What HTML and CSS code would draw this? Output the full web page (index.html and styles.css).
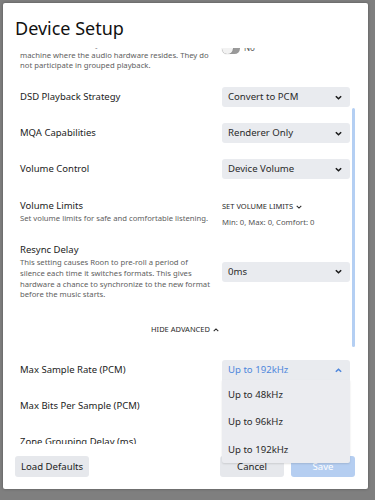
FILE: index.html
```html
<!DOCTYPE html>
<html lang="en">
<head>
    <meta charset="UTF-8">
    <meta name="viewport" content="width=device-width, initial-scale=1.0">
    <title>Device Setup</title>
    <link rel="stylesheet" href="styles.css">
</head>
<body>

<div class="modal">
    <div class="modal-head">
        <h1>Device Setup</h1>
    </div>

    <div class="modal-body">
        <div class="settings">
            <div class="row">
                <div class="info">
                    <div class="label">Private Zone</div>
                    <div class="desc">Private zones are only available on the<br>machine where the audio hardware resides. They do<br>not participate in grouped playback.</div>
                </div>
                <div class="control toggle-wrap">
                    <span class="toggle"><span class="knob"></span></span>
                    <span class="toggle-text">No</span>
                </div>
            </div>

            <div class="row">
                <div class="label">DSD Playback Strategy</div>
                <div class="select"><span>Convert to PCM</span><svg class="chev" viewBox="0 0 10 6"><path d="M1.2 1.2l3.8 3.6 3.8-3.6"/></svg></div>
            </div>

            <div class="row">
                <div class="label">MQA Capabilities</div>
                <div class="select"><span>Renderer Only</span><svg class="chev" viewBox="0 0 10 6"><path d="M1.2 1.2l3.8 3.6 3.8-3.6"/></svg></div>
            </div>

            <div class="row">
                <div class="label">Volume Control</div>
                <div class="select"><span>Device Volume</span><svg class="chev" viewBox="0 0 10 6"><path d="M1.2 1.2l3.8 3.6 3.8-3.6"/></svg></div>
            </div>

            <div class="row row-top limits-row">
                <div class="info">
                    <div class="label">Volume Limits</div>
                    <div class="desc">Set volume limits for safe and comfortable listening.</div>
                </div>
                <div class="control">
                    <div class="link">SET VOLUME LIMITS <svg class="chev small" viewBox="0 0 10 6"><path d="M1.2 1.2l3.8 3.6 3.8-3.6"/></svg></div>
                    <div class="limits">Min: 0, Max: 0, Comfort: 0</div>
                </div>
            </div>

            <div class="row">
                <div class="info">
                    <div class="label">Resync Delay</div>
                    <div class="desc">This setting causes Roon to pre-roll a period of<br>silence each time it switches formats. This gives<br>hardware a chance to synchronize to the new format<br>before the music starts.</div>
                </div>
                <div class="select"><span>0ms</span><svg class="chev" viewBox="0 0 10 6"><path d="M1.2 1.2l3.8 3.6 3.8-3.6"/></svg></div>
            </div>

            <div class="advanced">
                <span class="link">HIDE ADVANCED <svg class="chev small" viewBox="0 0 10 6"><path d="M1.2 4.8l3.8-3.6 3.8 3.6"/></svg></span>
            </div>

            <div class="row">
                <div class="label">Max Sample Rate (PCM)</div>
                <div class="select open"><span>Up to 192kHz</span><svg class="chev" viewBox="0 0 10 6"><path d="M1.2 4.8l3.8-3.6 3.8 3.6"/></svg></div>
            </div>

            <div class="row">
                <div class="label">Max Bits Per Sample (PCM)</div>
                <div class="select"><span>24 bits</span><svg class="chev" viewBox="0 0 10 6"><path d="M1.2 1.2l3.8 3.6 3.8-3.6"/></svg></div>
            </div>

            <div class="row">
                <div class="label">Zone Grouping Delay (ms)</div>
                <div class="select"><span>0ms</span><svg class="chev" viewBox="0 0 10 6"><path d="M1.2 1.2l3.8 3.6 3.8-3.6"/></svg></div>
            </div>
        </div>

        <div class="scrollbar"></div>
    </div>

    <div class="modal-foot">
        <button class="btn">Load Defaults</button>
        <button class="btn cancel">Cancel</button>
        <button class="btn save" disabled>Save</button>
    </div>

    <ul class="menu">
        <li>Up to 48kHz</li>
        <li>Up to 96kHz</li>
        <li>Up to 192kHz</li>
    </ul>
</div>

</body>
</html>
```

FILE: styles.css
```css
body {
    margin: 0;
    background-color: #7f7f7f;
    font-family: "Noto Sans", "Open Sans", sans-serif;
    color: #222;
    height: 500px;
    overflow: hidden;
}

.modal {
    position: relative;
    margin: 3px 0 0 3px;
    width: 365px;
    height: 486px;
    background-color: #fff;
    border-radius: 2px;
    box-shadow: 0 0 3px rgba(0,0,0,0.35);
    display: flex;
    flex-direction: column;
}

.modal-head {
    height: 45px;
    padding: 10px 12px 0;
    box-sizing: border-box;
}

.modal-head h1 {
    margin: 0;
    font-size: 18px;
    font-weight: 400;
    line-height: 30px;
    color: #111;
}

.modal-body {
    position: relative;
    flex: 1;
    overflow: hidden;
}

.settings {
    margin-top: -23px;
    padding: 0 18px 0 17px;
    display: flex;
    flex-direction: column;
    gap: 16px;
    font-size: 9.5px;
    line-height: 14px;
}

.row {
    display: grid;
    grid-template-columns: 194px 128px;
    column-gap: 8px;
    align-items: center;
}

.row-top {
    align-items: start;
}

.limits-row {
    padding-top: 4px;
}

.label {
    font-size: 9.5px;
    line-height: 14px;
    color: #1c1c1c;
}

.desc {
    font-size: 7.7px;
    line-height: 10.7px;
    color: #606060;
    white-space: nowrap;
}

.select {
    height: 20px;
    box-sizing: border-box;
    padding: 0 8px 0 6px;
    background-color: #e9ebef;
    border-radius: 3px;
    display: flex;
    align-items: center;
    justify-content: space-between;
    font-size: 9.6px;
    color: #2a2a2a;
}

.select.open {
    color: #4f87dc;
    border-radius: 3px 3px 0 0;
}

.chev {
    width: 7px;
    height: 5px;
    fill: none;
    stroke: currentColor;
    stroke-width: 2.3;
}

.select .chev {
    color: #1a1a1a;
}

.select.open .chev {
    color: #4f87dc;
}

.chev.small {
    width: 6px;
    height: 4px;
    stroke-width: 1.8;
    margin-left: 1px;
}

.toggle-wrap {
    display: flex;
    align-items: center;
    gap: 4px;
}

.toggle {
    position: relative;
    width: 18px;
    height: 11px;
    border-radius: 6px;
    background-color: #9a9a9a;
}

.toggle .knob {
    position: absolute;
    left: 0;
    top: 0;
    width: 11px;
    height: 11px;
    border-radius: 50%;
    background-color: #f2f2f2;
    box-shadow: 0 0 1px rgba(0,0,0,0.4);
}

.toggle-text {
    font-size: 8px;
    color: #555;
}

.link {
    font-size: 7.5px;
    line-height: 14px;
    color: #2a2a2a;
}

.limits {
    margin-top: 3.5px;
    font-size: 7.7px;
    line-height: 10.7px;
    color: #555;
}

.advanced {
    padding: 6px 0 8px;
    text-align: center;
    font-size: 7.5px;
    line-height: 14px;
}

.scrollbar {
    position: absolute;
    right: 13px;
    top: 60px;
    width: 3px;
    height: 239px;
    border-radius: 2px;
    background-color: #b4cff3;
}

.modal-foot {
    height: 45px;
    box-sizing: border-box;
    padding: 12px 13px 12px 12px;
    display: flex;
    align-items: flex-start;
    gap: 7px;
}

.btn {
    height: 21px;
    min-width: 64px;
    padding: 0 6px;
    border: none;
    border-radius: 3px;
    background-color: #e6e8ec;
    font-family: inherit;
    font-size: 9.6px;
    color: #222;
}

.btn.cancel {
    margin-left: auto;
}

.btn.save {
    background-color: #b5cef1;
    color: #fff;
}

.menu {
    position: absolute;
    top: 377px;
    left: 219px;
    width: 128px;
    margin: 0;
    padding: 1px 0 0;
    list-style: none;
    background-color: #ebecf0;
    border-radius: 0 0 2px 2px;
    box-shadow: 0 1px 2px rgba(0,0,0,0.12);
    z-index: 2;
}

.menu li {
    height: 27.3px;
    line-height: 27.3px;
    padding-left: 6px;
    font-size: 9.6px;
    color: #2a2a2a;
}
```
